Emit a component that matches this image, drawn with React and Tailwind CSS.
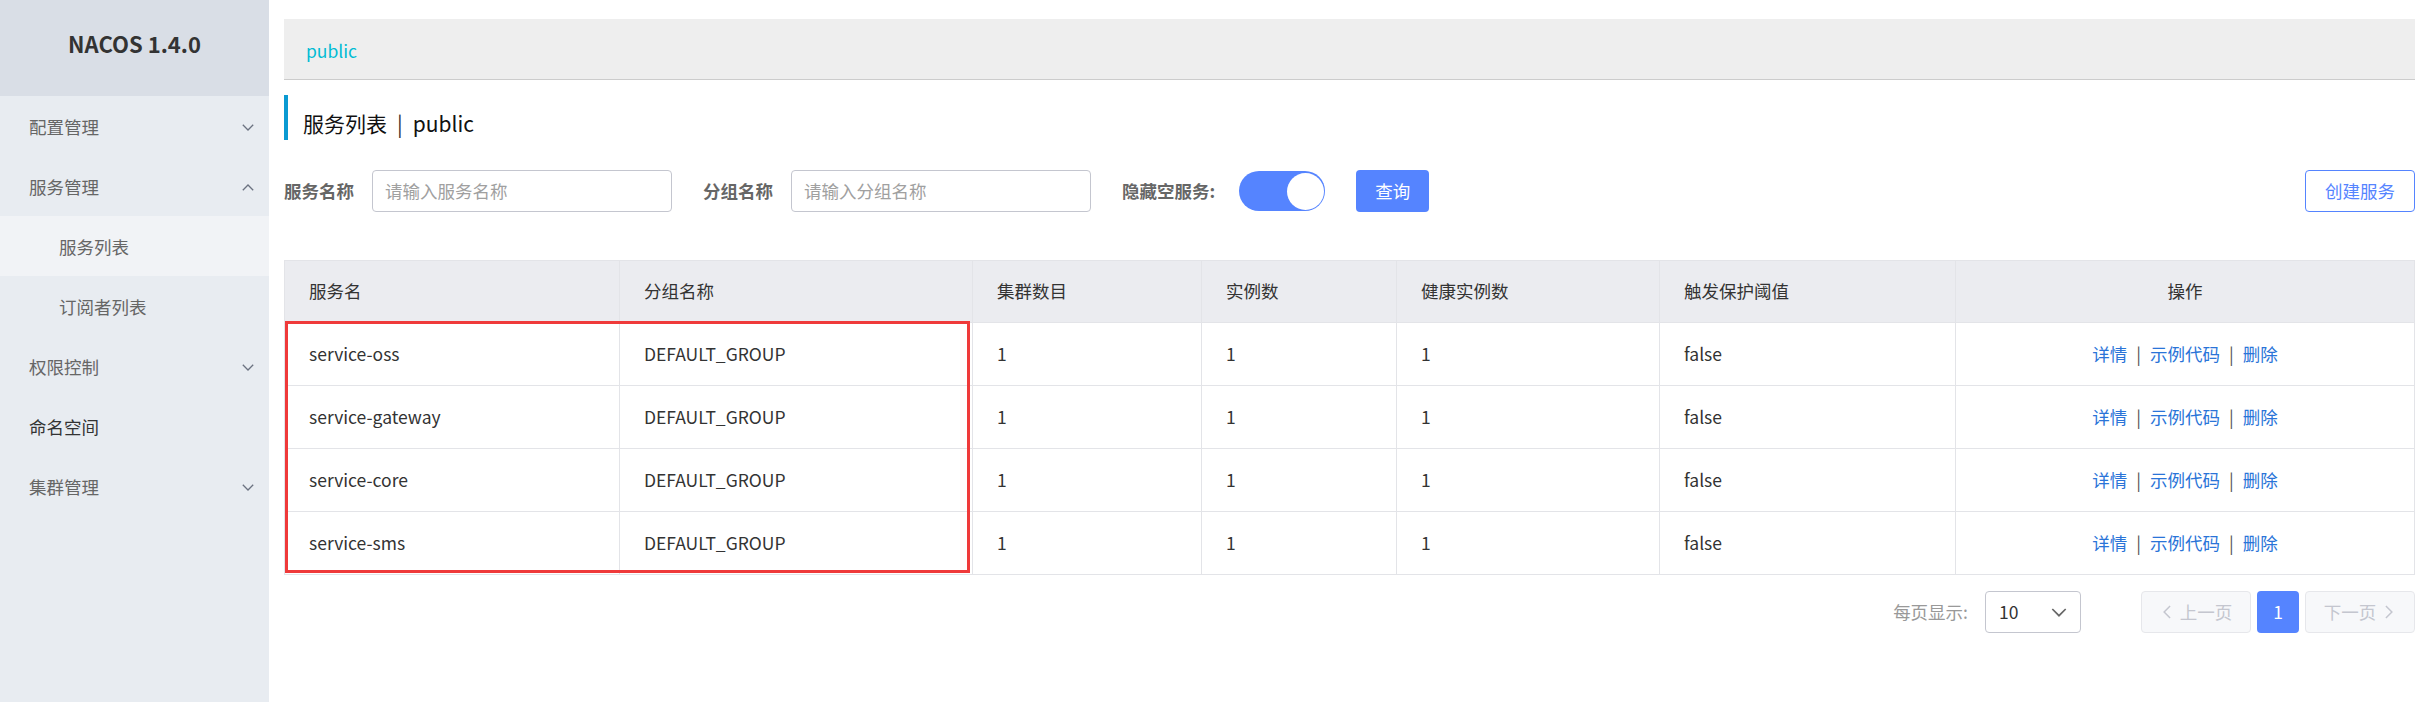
import React from "react";

const font = { fontFamily: "'Noto Sans CJK SC', 'Noto Sans', sans-serif" };

const menu = [
  { label: "配置管理", arrow: "down" },
  { label: "服务管理", arrow: "up" },
  { label: "服务列表", sub: true, active: true },
  { label: "订阅者列表", sub: true },
  { label: "权限控制", arrow: "down" },
  { label: "命名空间", plain: true },
  { label: "集群管理", arrow: "down" },
];

const rows = ["service-oss", "service-gateway", "service-core", "service-sms"];

const cols = [
  { label: "服务名", w: "w-[335px]" },
  { label: "分组名称", w: "w-[353px]" },
  { label: "集群数目", w: "w-[229px]" },
  { label: "实例数", w: "w-[195px]" },
  { label: "健康实例数", w: "w-[263px]" },
  { label: "触发保护阈值", w: "w-[296px]" },
  { label: "操作", w: "", center: true },
];

const Chevron = ({ dir = "down", className = "" }) => (
  <svg width="12" height="7" viewBox="0 0 12 7" className={className}>
    <path
      d={dir === "down" ? "M0.8 0.8 L6 6 L11.2 0.8" : "M0.8 6.2 L6 1 L11.2 6.2"}
      fill="none"
      stroke="currentColor"
      strokeWidth="1.3"
    />
  </svg>
);

const Sidebar = () => (
  <aside className="w-[269px] shrink-0 bg-[#e8ecf1] min-h-[702px]">
    <div className="h-[96px] bg-[#d9dee6] flex justify-center pt-[26px]">
      <span className="text-[22px] font-bold text-[#333] leading-[34px]">NACOS 1.4.0</span>
    </div>
    {menu.map((m) => (
      <div
        key={m.label}
        className={`h-[60px] flex items-center justify-between pr-[15px] text-[17.5px] pt-[2px] ${
          m.sub ? "pl-[59px]" : "pl-[29px]"
        } ${m.active ? "bg-[#f1f3f6]" : ""} ${m.plain ? "text-[#333]" : "text-[#666]"}`}
      >
        <span>{m.label}</span>
        {m.arrow && <Chevron dir={m.arrow} className="text-[#6b7280]" />}
      </div>
    ))}
  </aside>
);

const Field = ({ label, placeholder }) => (
  <div className="flex items-center gap-[18px]">
    <span className="text-[17.5px] font-bold text-[#666]">{label}</span>
    <div className="w-[300px] h-[42px] border border-[#c4c6cf] rounded-[4px] flex items-center px-[12px] text-[17.5px] text-[#a0a0a0]">
      {placeholder}
    </div>
  </div>
);

const App = () => (
  <div className="flex w-[2415px] h-[702px] overflow-hidden bg-white" style={font}>
    <Sidebar />
    <main className="flex-1 pl-[15px] pt-[19px] min-w-0">
      <div className="h-[61px] bg-[#eeeeee] border-b border-[#cccccc] flex items-center pl-[22px] pt-[5px]">
        <span className="text-[17.5px] text-[#00bcd4]">public</span>
      </div>

      <div className="mt-[15px] h-[45px] border-l-4 border-[#0a9ad2] flex items-end pb-[1px] pl-[15px] text-[21px] text-[#111]">
        <span>服务列表</span>
        <span className="mx-[10px] text-[#333]">|</span>
        <span>public</span>
      </div>

      <div className="mt-[30px] flex items-center">
        <Field label="服务名称" placeholder="请输入服务名称" />
        <div className="ml-[31px]">
          <Field label="分组名称" placeholder="请输入分组名称" />
        </div>
        <span className="ml-[31px] text-[17.5px] font-bold text-[#666]">隐藏空服务:</span>
        <div className="ml-[24px] w-[86px] h-[40px] rounded-full bg-[#5584ff] flex items-center justify-end pr-[1px]">
          <div className="w-[37px] h-[37px] rounded-full bg-white" />
        </div>
        <button className="ml-[31px] w-[73px] h-[42px] rounded-[4px] bg-[#5584ff] text-white text-[17.5px]">
          查询
        </button>
        <button className="ml-auto w-[110px] h-[42px] rounded-[4px] border border-[#5584ff] text-[#5584ff] text-[17.5px]">
          创建服务
        </button>
      </div>

      <div className="relative mt-[48px]">
        <table className="w-full border-collapse table-fixed text-[17.5px] text-[#333]">
          <thead>
            <tr className="h-[62px] bg-[#ebecf0]">
              {cols.map((c) => (
                <th
                  key={c.label}
                  className={`${c.w} border border-[#e3e4e8] font-normal ${
                    c.center ? "text-center" : "text-left pl-[24px]"
                  }`}
                >
                  {c.label}
                </th>
              ))}
            </tr>
          </thead>
          <tbody>
            {rows.map((r) => (
              <tr key={r} className="h-[63px]">
                <td className="border border-[#e3e4e8] pl-[24px]">{r}</td>
                <td className="border border-[#e3e4e8] pl-[24px]">DEFAULT_GROUP</td>
                <td className="border border-[#e3e4e8] pl-[24px]">1</td>
                <td className="border border-[#e3e4e8] pl-[24px]">1</td>
                <td className="border border-[#e3e4e8] pl-[24px]">1</td>
                <td className="border border-[#e3e4e8] pl-[24px]">false</td>
                <td className="border border-[#e3e4e8] text-center">
                  <span className="text-[#2a74d8]">详情</span>
                  <span className="mx-[9px] text-[#555]">|</span>
                  <span className="text-[#2a74d8]">示例代码</span>
                  <span className="mx-[9px] text-[#555]">|</span>
                  <span className="text-[#2a74d8]">删除</span>
                </td>
              </tr>
            ))}
          </tbody>
        </table>
        <div className="absolute left-[1px] top-[61px] w-[685px] h-[252px] border-[3px] border-[#ef3a3a] pointer-events-none" />
      </div>

      <div className="mt-[16px] flex items-center justify-end text-[17.5px]">
        <span className="text-[#999]">每页显示:</span>
        <div className="ml-[17px] w-[96px] h-[42px] border border-[#c4c6cf] rounded-[4px] flex items-center justify-between px-[13px] text-[#333]">
          <span>10</span>
          <Chevron dir="down" className="text-[#666] w-[16px] h-[9px]" />
        </div>
        <div className="ml-[60px] w-[110px] h-[42px] rounded-[4px] border border-[#e6e7eb] bg-[#f7f8fa] text-[#c4c6cf] flex items-center justify-center gap-[6px]">
          <Chevron dir="down" className="rotate-90 w-[14px] h-[8px]" />
          <span>上一页</span>
        </div>
        <div className="ml-[6px] w-[42px] h-[42px] rounded-[4px] bg-[#5584ff] text-white flex items-center justify-center">
          1
        </div>
        <div className="ml-[6px] w-[110px] h-[42px] rounded-[4px] border border-[#e6e7eb] bg-[#f7f8fa] text-[#c4c6cf] flex items-center justify-center gap-[6px]">
          <span>下一页</span>
          <Chevron dir="down" className="-rotate-90 w-[14px] h-[8px]" />
        </div>
      </div>
    </main>
  </div>
);

export default App;
